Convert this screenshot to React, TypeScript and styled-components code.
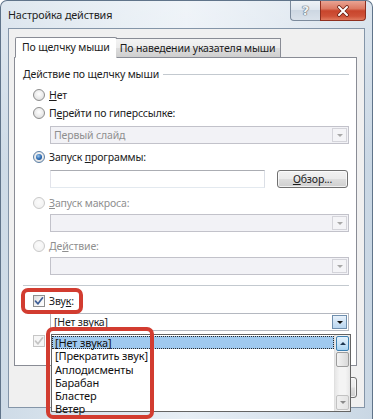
import React from "react";
import styled, { createGlobalStyle, css } from "styled-components";

const Global = createGlobalStyle`
  html, body { margin: 0; padding: 0; background: #ffffff; }
  body {
    width: 373px; height: 419px; overflow: hidden;
    font-family: "Noto Sans", "DejaVu Sans", sans-serif;
    font-size: 10.5px; letter-spacing: -0.15px; color: #1b1b1b;
  }
  * { box-sizing: border-box; }
`;

const Window = styled.div`
  position: relative;
  width: 373px;
  height: 419px;
  overflow: hidden;
  display: flex;
  flex-direction: column;
  padding: 0 7px;
  border: 1px solid #60748a;
  border-bottom: none;
  border-radius: 7px 7px 0 0;
  background:
    linear-gradient(180deg, rgba(255,255,255,0.35) 0%, rgba(255,255,255,0) 40%),
    linear-gradient(90deg, #cedbe7 0%, #dce6ef 25%, #e7eef5 50%, #dae4ee 75%, #c9d7e4 100%);
`;

const TitleBar = styled.div`
  height: 27px;
  display: flex;
  align-items: flex-start;
  margin-right: -1px;
`;

const Title = styled.span`
  align-self: center;
  font-size: 10.8px;
  color: #1e1e1e;
  margin-top: -1px;
`;

const CaptionButtons = styled.div`
  margin-left: auto;
  display: flex;
  height: 20px;
`;

const HelpButton = styled.div`
  width: 30px;
  height: 20px;
  border: 1px solid #7b8a9c;
  border-top: none;
  border-right: none;
  border-radius: 0 0 0 4px;
  background: linear-gradient(180deg, #eef2f6 0%, #dfe6ee 45%, #cdd7e2 50%, #d9e1ea 100%);
  display: flex;
  align-items: center;
  justify-content: center;
  font-family: "DejaVu Sans", sans-serif;
  font-weight: bold;
  font-size: 13px;
  color: #eef1f4;
  text-shadow: 0 0 1px #5a6470, 0 0 1px #5a6470, 0 0 1px #5a6470;
`;

const CloseButton = styled.div`
  width: 46px;
  height: 20px;
  border: 1px solid #8e2f1f;
  border-top: none;
  border-radius: 0 0 4px 0;
  background: linear-gradient(180deg, #e9a493 0%, #dc7a63 40%, #c8452c 52%, #cf5238 80%, #e07a5f 100%);
  display: flex;
  align-items: center;
  justify-content: center;
`;

const Client = styled.div`
  height: 380px;
  display: flex;
  flex-direction: column;
  padding: 0 7px 0 5px;
  background: #f0f0f0;
  border: 1px solid #8495a8;
`;

const TabStrip = styled.div`
  display: flex;
  align-items: flex-end;
  height: 21px;
  margin-top: 8px;
  padding-left: 1px;
  position: relative;
  z-index: 1;
`;

const Tab = styled.div<{ $active?: boolean }>`
  display: flex;
  align-items: center;
  border: 1px solid #898c95;
  color: #1b1b1b;
  ${(p) =>
    p.$active
      ? css`
          height: 21px;
          background: #ffffff;
          border-bottom-color: #ffffff;
          border-radius: 2px 2px 0 0;
          padding: 0 6px 2px;
        `
      : css`
          height: 19px;
          margin-bottom: 1px;
          margin-left: -1px;
          background: linear-gradient(180deg, #f3f3f3 0%, #ebebeb 50%, #dddddd 51%, #cfcfcf 100%);
          border-left: none;
          border-bottom: none;
          padding: 0 5px 1px 4px;
        `}
`;

const Panel = styled.div`
  height: 309px;
  margin-top: -1px;
  background: #ffffff;
  border: 1px solid #898c95;
  padding: 9px 7px 0 8px;
  display: flex;
  flex-direction: column;
`;

const GroupHeader = styled.div`
  height: 14px;
  display: flex;
  align-items: center;
  gap: 4px;
  &::after {
    content: "";
    flex: 1;
    height: 1px;
    margin-top: 1px;
    background: #c3c9cf;
  }
`;

const Option = styled.div<{ $mt: number; $disabled?: boolean }>`
  display: flex;
  align-items: center;
  gap: 4px;
  height: 16px;
  margin-top: ${(p) => p.$mt}px;
  margin-left: 10px;
  color: ${(p) => (p.$disabled ? "#8f8f8f" : "#1b1b1b")};
`;

const Radio = styled.span<{ $checked?: boolean; $disabled?: boolean }>`
  flex: none;
  width: 12px;
  height: 12px;
  border-radius: 50%;
  border: 1px solid ${(p) => (p.$disabled ? "#c9c9c9" : "#8d8d8d")};
  background: ${(p) =>
    p.$disabled
      ? "radial-gradient(circle at 50% 40%, #fbfbfb 0%, #efefef 100%)"
      : "radial-gradient(circle at 50% 40%, #ffffff 0%, #e8e8e8 60%, #cfcfcf 100%)"};
  display: flex;
  align-items: center;
  justify-content: center;
  ${(p) =>
    p.$checked &&
    css`
      border-color: #5b7fa6;
      &::after {
        content: "";
        width: 6px;
        height: 6px;
        border-radius: 50%;
        background: radial-gradient(circle at 40% 35%, #9cc8ee 0%, #2a68b0 55%, #123f7a 100%);
      }
    `}
`;

const CheckBox = styled.span<{ $disabled?: boolean }>`
  flex: none;
  width: 12px;
  height: 12px;
  border: 1px solid ${(p) => (p.$disabled ? "#c6c6c6" : "#8e8f8f")};
  background: ${(p) =>
    p.$disabled ? "#f6f6f6" : "linear-gradient(135deg, #dcdcdc 0%, #f6f6f6 60%, #ffffff 100%)"};
  display: flex;
  align-items: center;
  justify-content: center;
`;

const Combo = styled.div<{ $mt: number; $disabled?: boolean }>`
  display: flex;
  height: 18px;
  margin: ${(p) => p.$mt}px 0 0 27px;
  border: 1px solid ${(p) => (p.$disabled ? "#c2c2ca" : "#b4b8c0")};
  background: ${(p) => (p.$disabled ? "#f2f2f6" : "#ffffff")};
`;

const ComboText = styled.span<{ $disabled?: boolean }>`
  flex: 1;
  padding-left: 3px;
  line-height: 16px;
  color: ${(p) => (p.$disabled ? "#8f8f8f" : "#1b1b1b")};
`;

const ComboArrow = styled.span<{ $active?: boolean }>`
  width: 15px;
  margin: 1px 1px 1px 0;
  display: flex;
  align-items: center;
  justify-content: center;
  border: 1px solid ${(p) => (p.$active ? "#6f8fae" : "#d4d4da")};
  background: ${(p) =>
    p.$active ? "linear-gradient(180deg, #e8f2fb 0%, #cfe3f5 50%, #b9d6f0 100%)" : "#f4f4f7"};
  &::after {
    content: "";
    border-left: 3px solid transparent;
    border-right: 3px solid transparent;
    border-top: 3px solid ${(p) => (p.$active ? "#111" : "#a8a8a8")};
  }
`;

const InputRow = styled.div`
  display: flex;
  gap: 12px;
  height: 18px;
  margin: 5px 1px 0 27px;
`;

const TextInput = styled.div`
  width: 215px;
  border: 1px solid #abadb3;
  border-color: #abadb3 #dbdfe6 #e3e9ef #e2e3ea;
  background: #ffffff;
`;

const PushButton = styled.div<{ $w?: number }>`
  width: ${(p) => p.$w ?? 71}px;
  display: flex;
  align-items: center;
  justify-content: center;
  border: 1px solid #707070;
  border-radius: 3px;
  color: #1b1b1b;
  background: linear-gradient(180deg, #f2f2f2 0%, #ebebeb 48%, #dddddd 52%, #cfcfcf 100%);
  box-shadow: inset 0 0 0 1px rgba(255, 255, 255, 0.7);
`;

const Separator = styled.div`
  height: 1px;
  margin-top: 10px;
  background: #c3c9cf;
`;

const Footer = styled.div`
  display: flex;
  justify-content: flex-end;
  gap: 7px;
  padding-top: 11px;
  height: 21px;
  box-sizing: content-box;
`;

const DropList = styled.div`
  position: absolute;
  left: 50px;
  top: 333px;
  width: 300px;
  height: 78px;
  border: 1px solid #646464;
  background: #ffffff;
  display: flex;
  z-index: 3;
`;

const ListItems = styled.div`
  flex: 1;
  display: flex;
  flex-direction: column;
  padding-top: 1px;
  font-size: 11px;
`;

const ListItem = styled.div<{ $selected?: boolean }>`
  height: 13.3px;
  line-height: 12px;
  padding-left: 2px;
  color: #111;
  border: 1px solid transparent;
  ${(p) =>
    p.$selected &&
    css`
      background: #9fc9ef;
      border: 1px dotted #2a2a2a;
    `}
`;

const ScrollBar = styled.div`
  width: 16px;
  display: flex;
  flex-direction: column;
  background: linear-gradient(90deg, #e6e6e6 0%, #f4f4f4 30%, #f4f4f4 70%, #e6e6e6 100%);
  border-left: 1px solid #e0e0e0;
`;

const ScrollArrow = styled.div<{ $up?: boolean; $hot?: boolean }>`
  height: 15px;
  margin: 1px;
  display: flex;
  align-items: center;
  justify-content: center;
  border: 1px solid ${(p) => (p.$hot ? "#3c7fb1" : "#c2c2c2")};
  border-radius: 2px;
  background: ${(p) =>
    p.$hot
      ? "linear-gradient(180deg, #e3f1fc 0%, #cde6f8 50%, #a9d4f3 100%)"
      : "linear-gradient(90deg, #f0f0f0 0%, #e4e4e4 100%)"};
  &::after {
    content: "";
    border-left: 3px solid transparent;
    border-right: 3px solid transparent;
    ${(p) =>
      p.$up
        ? css`border-bottom: 3px solid ${p.$hot ? "#1c3550" : "#8a8a8a"};`
        : css`border-top: 3px solid #8a8a8a;`}
  }
`;

const Thumb = styled.div`
  height: 15px;
  margin: 0 1px;
  border: 1px solid #9c9c9c;
  border-radius: 2px;
  background: linear-gradient(90deg, #f3f3f3 0%, #e6e6e6 50%, #d9d9d9 100%);
`;

const Track = styled.div`
  flex: 1;
`;

const RedFrame = styled.div<{ $x: number; $y: number; $w: number; $h: number }>`
  position: absolute;
  left: ${(p) => p.$x}px;
  top: ${(p) => p.$y}px;
  width: ${(p) => p.$w}px;
  height: ${(p) => p.$h}px;
  border: 4px solid #d23c30;
  border-radius: 7px;
  z-index: 5;
`;

const Key = styled.u`
  text-decoration: underline;
  text-underline-offset: 1px;
`;

const CheckMark = ({ color }: { color: string }) => (
  <svg width="10" height="10" viewBox="0 0 10 10">
    <path d="M1.5 5.2 L4 7.8 L8.6 1.8" fill="none" stroke={color} strokeWidth="1.7" strokeLinecap="round" strokeLinejoin="round" />
  </svg>
);

const CloseGlyph = () => (
  <svg width="14" height="12" viewBox="0 0 14 12">
    <path d="M3 2 L11 10 M11 2 L3 10" stroke="#6b2013" strokeWidth="3.6" strokeLinecap="round" />
    <path d="M3 2 L11 10 M11 2 L3 10" stroke="#ffffff" strokeWidth="2" strokeLinecap="round" />
  </svg>
);

const soundItems = ["[Нет звука]", "[Прекратить звук]", "Аплодисменты", "Барабан", "Бластер", "Ветер"];

export default function App() {
  return (
    <>
      <Global />
      <Window>
        <TitleBar>
          <Title>Настройка действия</Title>
          <CaptionButtons>
            <HelpButton>?</HelpButton>
            <CloseButton>
              <CloseGlyph />
            </CloseButton>
          </CaptionButtons>
        </TitleBar>
        <Client>
          <TabStrip>
            <Tab $active>По щелчку мыши</Tab>
            <Tab>По наведении указателя мыши</Tab>
          </TabStrip>
          <Panel>
            <GroupHeader>Действие по щелчку мыши</GroupHeader>
            <Option $mt={6}>
              <Radio />
              <span>
                <Key>Н</Key>ет
              </span>
            </Option>
            <Option $mt={2}>
              <Radio />
              <span>
                П<Key>е</Key>рейти по гиперссылке:
              </span>
            </Option>
            <Combo $mt={5} $disabled>
              <ComboText $disabled>Первый слайд</ComboText>
              <ComboArrow />
            </Combo>
            <Option $mt={5}>
              <Radio $checked />
              <span>
                Запуск <Key>п</Key>рограммы:
              </span>
            </Option>
            <InputRow>
              <TextInput />
              <PushButton>
                <span>
                  <Key>О</Key>бзор...
                </span>
              </PushButton>
            </InputRow>
            <Option $mt={7} $disabled>
              <Radio $disabled />
              <span>
                <Key>З</Key>апуск макроса:
              </span>
            </Option>
            <Combo $mt={3} $disabled>
              <ComboText $disabled />
              <ComboArrow />
            </Combo>
            <Option $mt={6} $disabled>
              <Radio $disabled />
              <span>
                Де<Key>й</Key>ствие:
              </span>
            </Option>
            <Combo $mt={3} $disabled>
              <ComboText $disabled />
              <ComboArrow />
            </Combo>
            <Separator />
            <Option $mt={7}>
              <CheckBox>
                <CheckMark color="#3f5f96" />
              </CheckBox>
              <span>
                Зву<Key>к</Key>:
              </span>
            </Option>
            <Combo $mt={4}>
              <ComboText>[Нет звука]</ComboText>
              <ComboArrow $active />
            </Combo>
            <Option $mt={2} $disabled>
              <CheckBox $disabled>
                <CheckMark color="#c4c4c4" />
              </CheckBox>
            </Option>
          </Panel>
          <Footer>
            <PushButton $w={75} />
            <PushButton $w={75} />
          </Footer>
        </Client>
        <DropList>
          <ListItems>
            {soundItems.map((s, i) => (
              <ListItem key={s} $selected={i === 0}>
                {s}
              </ListItem>
            ))}
          </ListItems>
          <ScrollBar>
            <ScrollArrow $up $hot />
            <Thumb />
            <Track />
            <ScrollArrow />
          </ScrollBar>
        </DropList>
        <RedFrame $x={20} $y={287} $w={62} $h={26} />
        <RedFrame $x={45} $y={326} $w={108} $h={92} />
      </Window>
    </>
  );
}
